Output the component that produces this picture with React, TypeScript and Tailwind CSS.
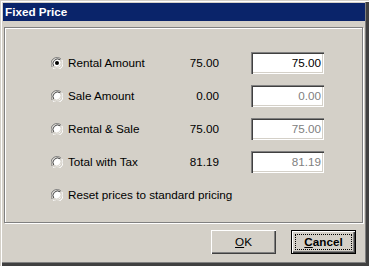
import React from 'react';

const rows = [
  { label: 'Rental Amount', value: '75.00', field: '75.00', checked: true, enabled: true },
  { label: 'Sale Amount', value: '0.00', field: '0.00', checked: false, enabled: false },
  { label: 'Rental & Sale', value: '75.00', field: '75.00', checked: false, enabled: false },
  { label: 'Total with Tax', value: '81.19', field: '81.19', checked: false, enabled: false },
];

function Radio({ checked }: { checked?: boolean }) {
  return (
    <svg width="12" height="12" viewBox="0 0 12 12" className="shrink-0">
      <path d="M10.5 2.5 A6 6 0 0 0 1.5 10.5" fill="none" stroke="#808080" strokeWidth="1" />
      <path d="M1.5 10.5 A6 6 0 0 0 10.5 2.5" fill="none" stroke="#ffffff" strokeWidth="1" />
      <circle cx="6" cy="6" r="4.5" fill="#ffffff" />
      <path d="M9.2 2.8 A4.6 4.6 0 0 0 2.8 9.2" fill="none" stroke="#404040" strokeWidth="1" />
      <path d="M2.8 9.2 A4.6 4.6 0 0 0 9.2 2.8" fill="none" stroke="#d4d0c8" strokeWidth="1" />
      {checked && <circle cx="6" cy="6" r="2" fill="#000000" />}
    </svg>
  );
}

function Field({ text, enabled }: { text: string; enabled: boolean }) {
  return (
    <div className="ml-[32px] w-[73px] h-[22px] bg-white shadow-[inset_1px_1px_0_#808080,inset_2px_2px_0_#404040,inset_-1px_-1px_0_#ffffff,inset_-2px_-2px_0_#d4d0c8] flex items-center justify-end pr-[3px]">
      <span className={enabled ? 'text-black' : 'text-[#808080]'}>{text}</span>
    </div>
  );
}

function Button({ children, isDefault }: { children: React.ReactNode; isDefault?: boolean }) {
  if (isDefault) {
    return (
      <div className="w-[65px] h-[24px] border border-black bg-[#d4d0c8]">
        <div className="w-full h-full shadow-[inset_1px_1px_0_#ffffff,inset_-1px_-1px_0_#404040,inset_-2px_-2px_0_#808080] p-[3px]">
          <div className="w-full h-full border border-dotted border-black flex items-center justify-center font-bold">
            {children}
          </div>
        </div>
      </div>
    );
  }
  return (
    <div className="w-[65px] h-[24px] bg-[#d4d0c8] shadow-[inset_1px_1px_0_#ffffff,inset_-1px_-1px_0_#404040,inset_-2px_-2px_0_#808080] flex items-center justify-center">
      {children}
    </div>
  );
}

export default function App() {
  return (
    <div
      className="w-[369px] h-[266px] bg-[#d4d0c8] text-[11.7px] text-black pt-[3px] pl-[3px] pr-[4px] pb-[4px] flex flex-col shadow-[inset_1px_1px_0_#d4d0c8,inset_2px_2px_0_#ffffff,inset_-1px_-1px_0_#404040,inset_-3px_-3px_0_#404040,inset_-4px_-4px_0_#808080]"
      style={{ fontFamily: '"Liberation Sans", Arial, sans-serif' }}
    >
      <div className="h-[18px] bg-[#0a246a] text-white font-bold flex items-center pl-[2px] text-[11.7px]">
        Fixed Price
      </div>

      <div className="mt-[6px] ml-[1px] w-[359px] h-[196px] border border-[#808080] shadow-[inset_1px_1px_0_#ffffff,1px_1px_0_#ffffff] pt-[24px] pl-[46px] flex flex-col gap-[11px]">
        {rows.map((r) => (
          <div key={r.label} className="flex items-center h-[22px]">
            <div className="w-[128px] flex items-center gap-[5px]">
              <Radio checked={r.checked} />
              <span>{r.label}</span>
            </div>
            <div className="w-[40px] text-right">{r.value}</div>
            <Field text={r.field} enabled={r.enabled} />
          </div>
        ))}
        <div className="flex items-center h-[22px]">
          <div className="flex items-center gap-[5px] whitespace-nowrap">
            <Radio />
            <span>Reset prices to standard pricing</span>
          </div>
        </div>
      </div>

      <div className="mt-[7px] flex justify-end gap-[15px] pr-[9px]">
        <Button>
          <span>
            <span className="underline">O</span>K
          </span>
        </Button>
        <Button isDefault>
          <span>
            <span className="underline">C</span>ancel
          </span>
        </Button>
      </div>
    </div>
  );
}
